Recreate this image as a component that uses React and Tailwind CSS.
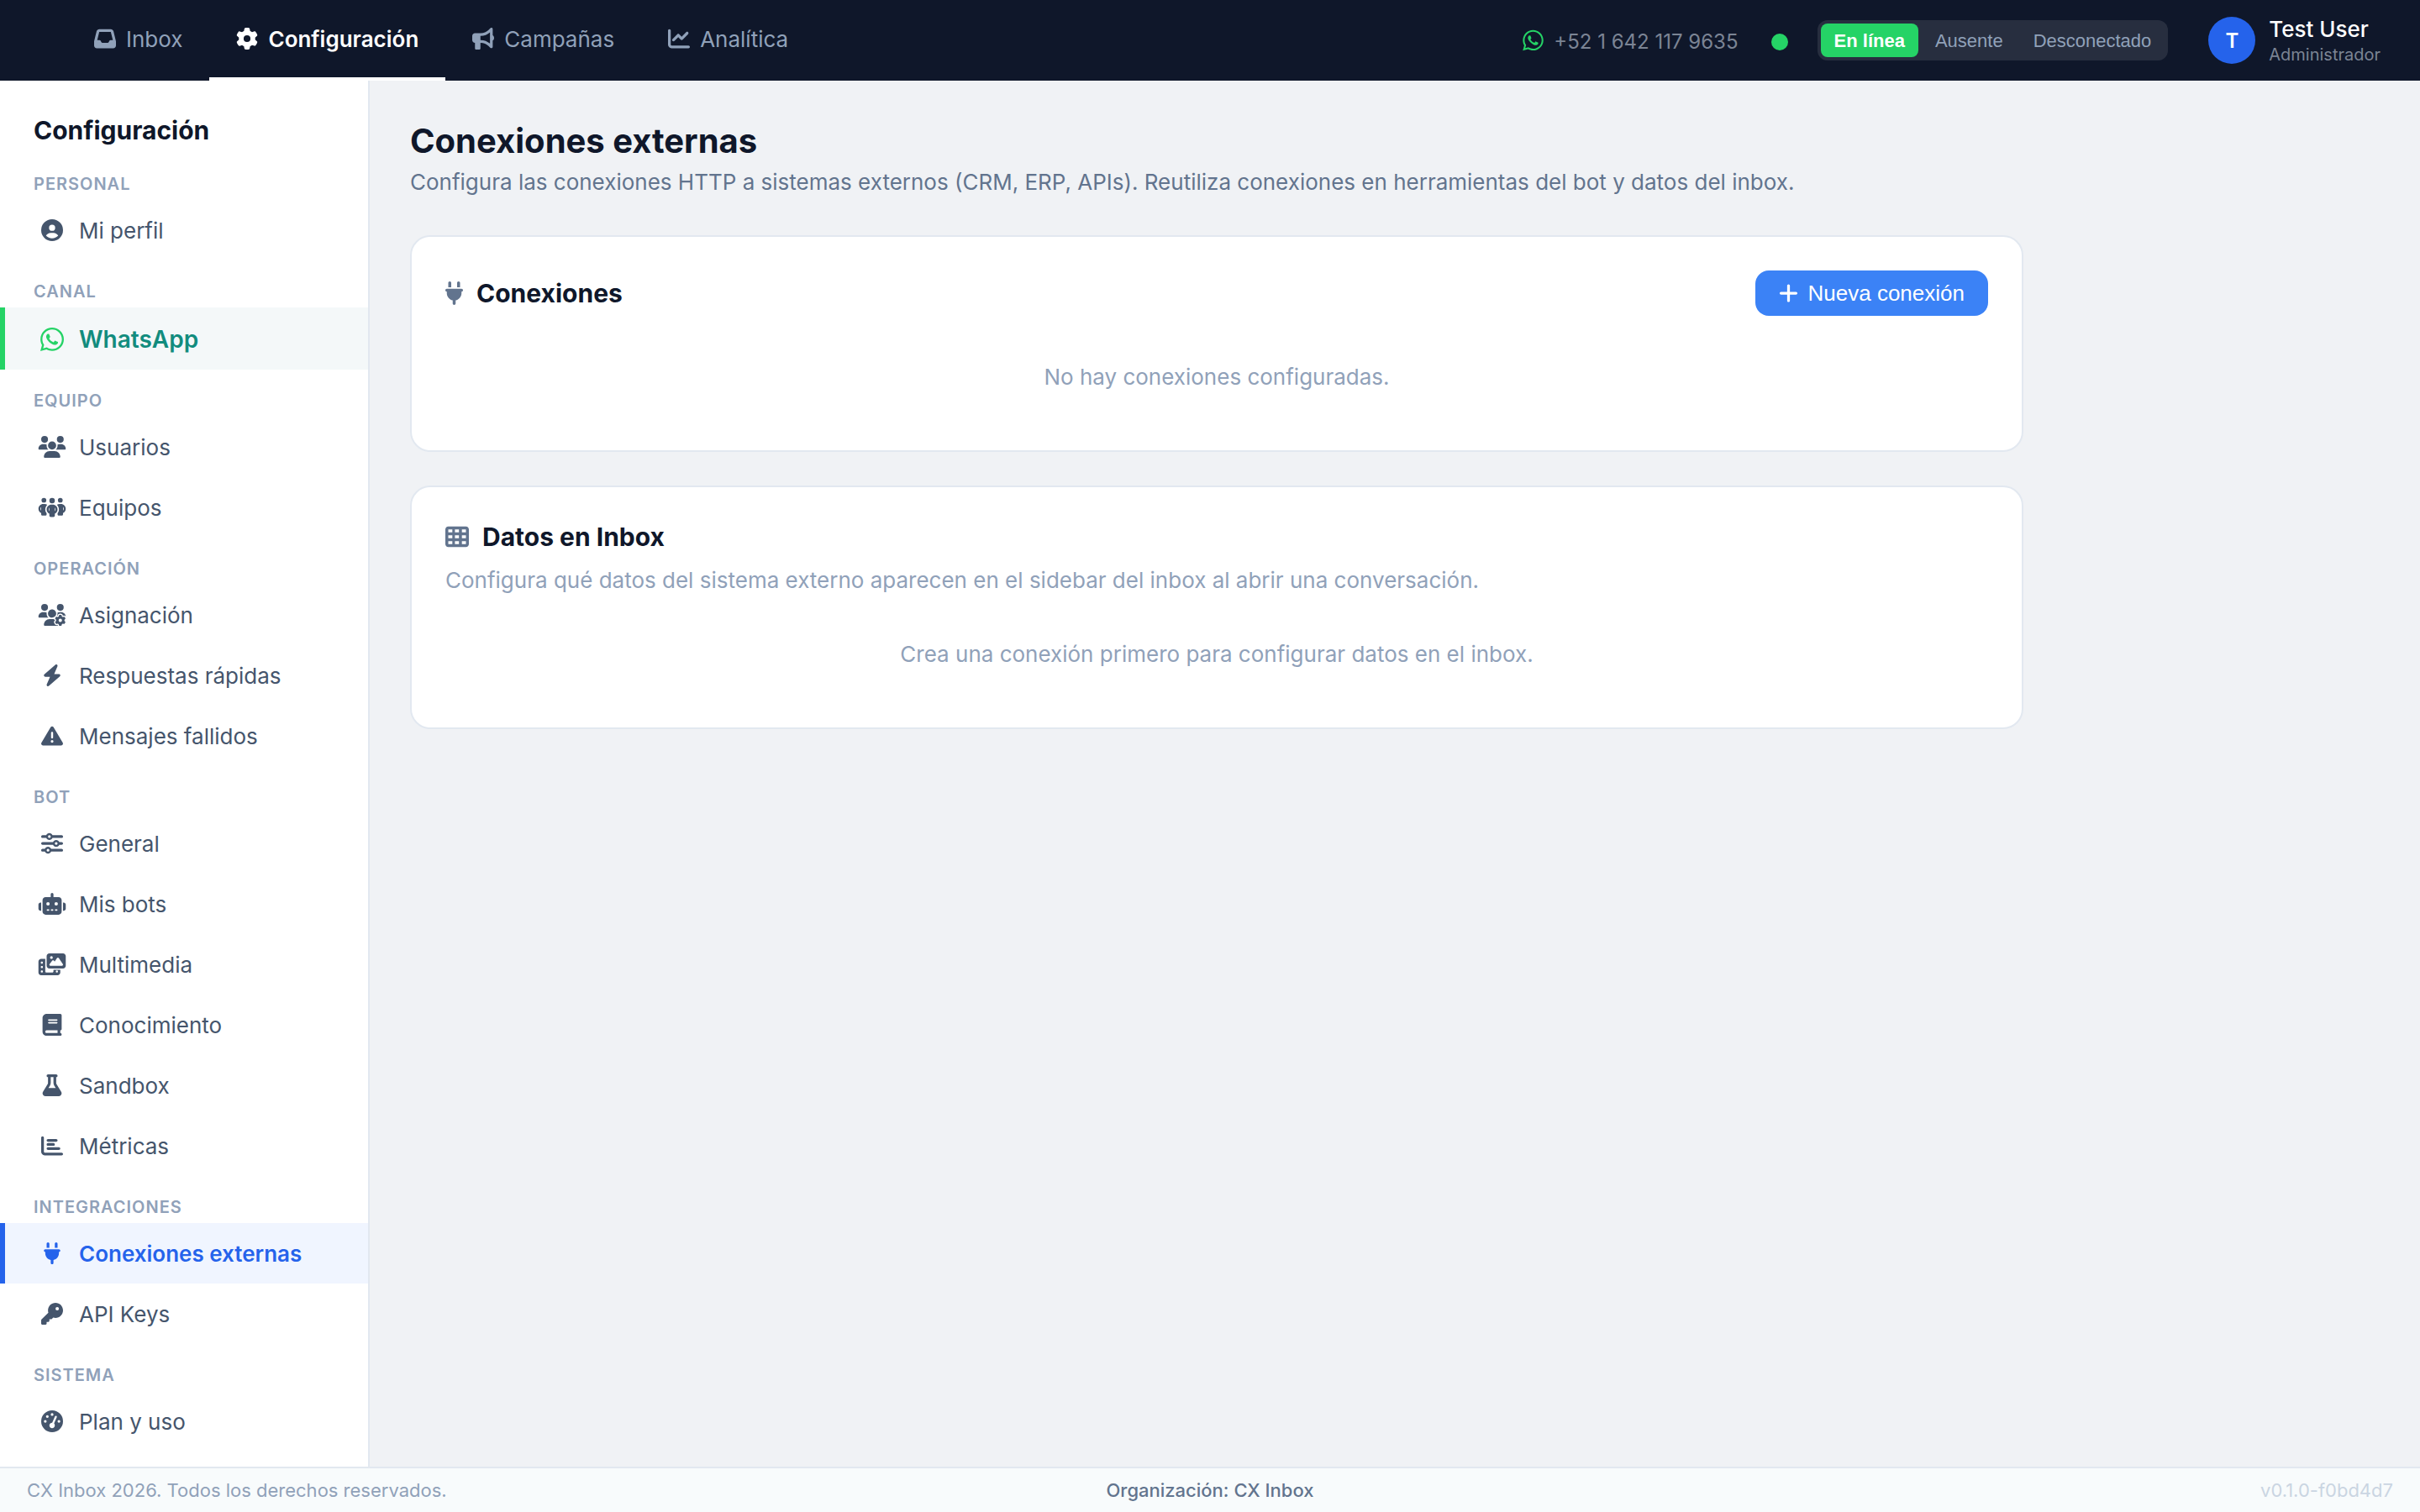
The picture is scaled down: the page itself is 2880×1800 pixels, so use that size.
import {
  FaBolt,
  FaBook,
  FaBullhorn,
  FaChartBar,
  FaChartLine,
  FaCircleUser,
  FaFlask,
  FaGaugeHigh,
  FaGear,
  FaInbox,
  FaKey,
  FaPeopleGroup,
  FaPhotoFilm,
  FaPlug,
  FaPlus,
  FaRobot,
  FaSliders,
  FaTableCells,
  FaTriangleExclamation,
  FaUsers,
  FaUsersGear,
  FaWhatsapp,
} from 'react-icons/fa6'

const tabs = [
  { label: 'Inbox', icon: FaInbox },
  { label: 'Configuración', icon: FaGear, active: true },
  { label: 'Campañas', icon: FaBullhorn },
  { label: 'Analítica', icon: FaChartLine },
]

const sections = [
  { title: 'Personal', items: [{ label: 'Mi perfil', icon: FaCircleUser }] },
  { title: 'Canal', items: [{ label: 'WhatsApp', icon: FaWhatsapp, variant: 'whatsapp' }] },
  {
    title: 'Equipo',
    items: [
      { label: 'Usuarios', icon: FaUsers },
      { label: 'Equipos', icon: FaPeopleGroup },
    ],
  },
  {
    title: 'Operación',
    items: [
      { label: 'Asignación', icon: FaUsersGear },
      { label: 'Respuestas rápidas', icon: FaBolt },
      { label: 'Mensajes fallidos', icon: FaTriangleExclamation },
    ],
  },
  {
    title: 'Bot',
    items: [
      { label: 'General', icon: FaSliders },
      { label: 'Mis bots', icon: FaRobot },
      { label: 'Multimedia', icon: FaPhotoFilm },
      { label: 'Conocimiento', icon: FaBook },
      { label: 'Sandbox', icon: FaFlask },
      { label: 'Métricas', icon: FaChartBar },
    ],
  },
  {
    title: 'Integraciones',
    items: [
      { label: 'Conexiones externas', icon: FaPlug, variant: 'active' },
      { label: 'API Keys', icon: FaKey },
    ],
  },
  { title: 'Sistema', items: [{ label: 'Plan y uso', icon: FaGaugeHigh }] },
]

const itemStyles = {
  default: 'h-[72px] border-transparent text-[26px] text-slate-600',
  active: 'h-[72px] border-[#2563eb] bg-[#f0f5ff] text-[26px] font-semibold text-[#2563eb]',
  whatsapp: 'h-[74px] border-[#25d366] bg-[#f4f8f9] pt-[2px] text-[28px] font-semibold text-[#128c7e]',
}

function Header() {
  return (
    <header className="flex h-24 shrink-0 items-stretch justify-between bg-[#0f172a] pl-20 pr-[47px]">
      <nav className="flex">
        {tabs.map(({ label, icon: Icon, active }) => (
          <a
            key={label}
            href="#"
            className={`flex items-center gap-3 border-b-4 px-8 text-[26px] ${
              active ? 'border-white font-semibold text-white' : 'border-transparent text-slate-400'
            }`}
          >
            <Icon className="size-[26px]" />
            {label}
          </a>
        ))}
      </nav>

      <div className="flex items-center">
        <div className="flex items-center gap-3 text-[24px] text-[#7b8494]">
          <FaWhatsapp className="h-[28px] w-[25px] text-[#25d366]" />
          <span className="pt-[3px]">+52 1 642 117 9635</span>
        </div>
        <span className="ml-[39px] mt-[3px] size-5 rounded-full bg-[#25d366]" />

        {/* Availability */}
        <div className="ml-[35px] flex h-12 gap-1 rounded-xl bg-white/10 p-1 font-['Liberation_Sans',Arial,sans-serif] text-[22px] text-slate-400">
          <button className="rounded-lg bg-[#25d366] px-4 font-bold text-white">En línea</button>
          <button className="px-4">Ausente</button>
          <button className="px-4">Desconectado</button>
        </div>

        {/* User */}
        <div className="ml-12 flex items-center gap-4">
          <div className="flex size-14 items-center justify-center rounded-full bg-[#2563eb] pt-[2px] text-[24px] font-semibold text-white">
            T
          </div>
          <div className="pt-[2px]">
            <p className="text-[26px] leading-[32px] font-medium text-white">Test User</p>
            <p className="text-[20px] leading-[28px] text-[#7b8494]">Administrador</p>
          </div>
        </div>
      </div>
    </header>
  )
}

function Sidebar() {
  return (
    <aside className="w-[440px] shrink-0 border-r-2 border-slate-200 bg-white">
      <h2 className="flex h-[86px] items-end px-10 pb-[7px] text-[30px] leading-[40px] font-bold text-[#0f172a]">
        Configuración
      </h2>
      {sections.map((section) => (
        <div key={section.title}>
          <h3 className="h-14 px-10 pt-[22px] text-[20px] leading-[30px] font-semibold tracking-[1px] text-slate-400 uppercase">
            {section.title}
          </h3>
          {section.items.map(({ label, icon: Icon, variant = 'default' }) => (
            <a
              key={label}
              href="#"
              className={`flex items-center gap-[10px] border-l-[6px] pl-[34px] ${itemStyles[variant]}`}
            >
              <span className="flex w-11 justify-center">
                <Icon className={variant === 'whatsapp' ? 'size-8 text-[#25d366]' : 'h-[26px] w-[34px]'} />
              </span>
              {label}
            </a>
          ))}
        </div>
      ))}
    </aside>
  )
}

function Card({ className, children }) {
  return (
    <section className={`w-[1920px] rounded-3xl border-2 border-slate-200 bg-white p-10 ${className}`}>
      {children}
    </section>
  )
}

function CardTitle({ icon, children }) {
  return (
    <h2 className="flex items-center gap-4 text-[30px] leading-[38px] font-bold text-[#0f172a]">
      {icon}
      {children}
    </h2>
  )
}

export default function App() {
  return (
    <div className="flex h-screen flex-col overflow-hidden bg-[#f0f2f5] font-['Inter',sans-serif]">
      <Header />

      <div className="flex min-h-0 flex-1">
        <Sidebar />
        <main className="flex-1 px-12 pt-12">
          <h1 className="text-[40px] leading-[48px] font-bold text-[#0f172a]">Conexiones externas</h1>
          <p className="mt-[8px] text-[26px] leading-[34px] text-slate-500">
            Configura las conexiones HTTP a sistemas externos (CRM, ERP, APIs). Reutiliza conexiones en
            herramientas del bot y datos del inbox.
          </p>

          <Card className="mt-[46px] h-[258px]">
            <div className="flex items-center justify-between">
              <CardTitle icon={<FaPlug className="h-7 w-[21px] text-slate-500" />}>Conexiones</CardTitle>
              <button className="flex h-[54px] items-center gap-3 rounded-2xl bg-[#3b82f6] px-7 font-['Liberation_Sans',Arial,sans-serif] text-[26px] text-white">
                <FaPlus className="h-[26px] w-[23px]" />
                Nueva conexión
              </button>
            </div>
            <p className="mt-14 text-center text-[26px] leading-[34px] text-slate-400">
              No hay conexiones configuradas.
            </p>
          </Card>

          <Card className="mt-10 h-[290px]">
            <CardTitle icon={<FaTableCells className="size-7 text-slate-500" />}>Datos en Inbox</CardTitle>
            <p className="mt-4 text-[26px] leading-[34px] text-slate-400">
              Configura qué datos del sistema externo aparecen en el sidebar del inbox al abrir una
              conversación.
            </p>
            <p className="mt-[54px] text-center text-[26px] leading-[34px] text-slate-400">
              Crea una conexión primero para configurar datos en el inbox.
            </p>
          </Card>
        </main>
      </div>

      <footer className="grid h-[54px] shrink-0 grid-cols-3 items-center border-t-2 border-slate-200 bg-[#f8fbfc] px-8 text-[22px] text-slate-400">
        <span>CX Inbox 2026. Todos los derechos reservados.</span>
        <span className="text-center font-medium text-slate-500">Organización: CX Inbox</span>
        <span className="text-right text-slate-300">v0.1.0-f0bd4d7</span>
      </footer>
    </div>
  )
}
